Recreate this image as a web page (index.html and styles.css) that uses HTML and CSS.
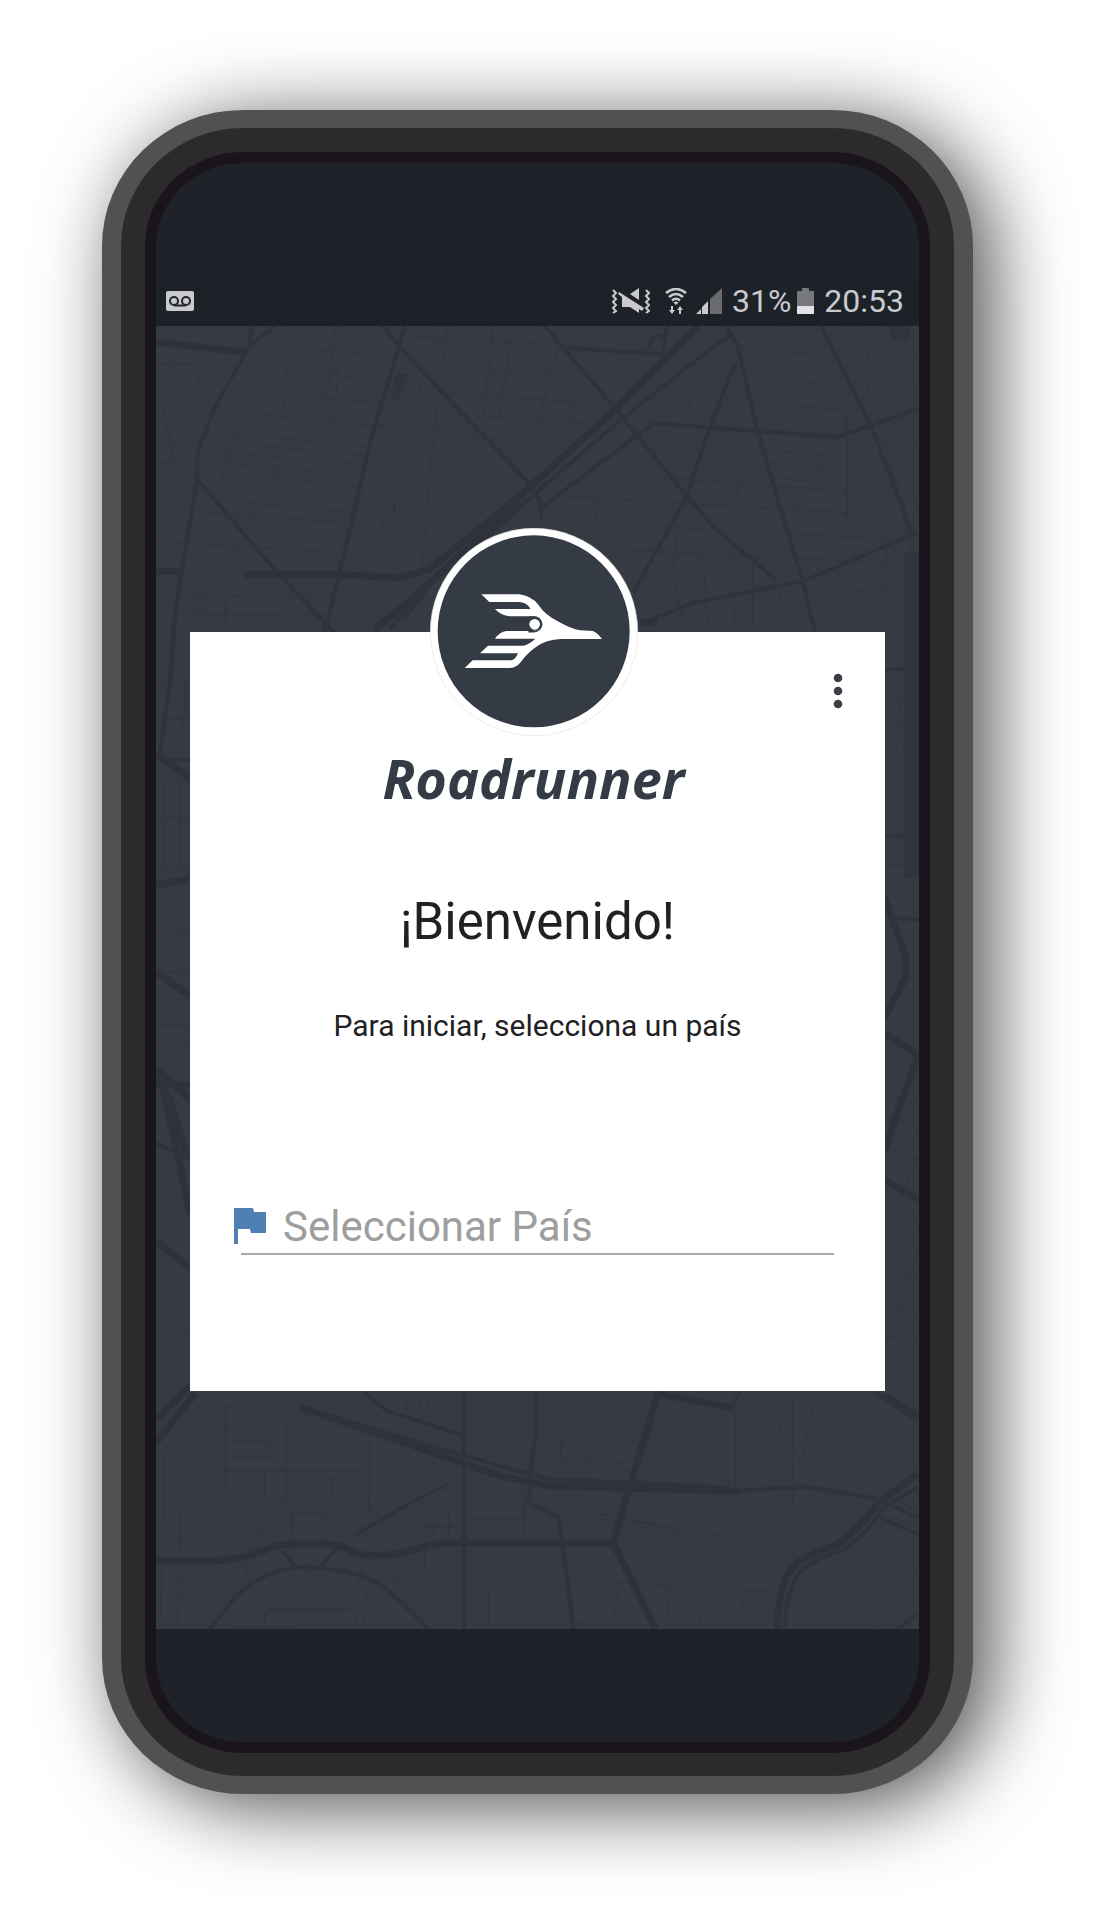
FILE: index.html
```
<!DOCTYPE html>
<html lang="es">
<head>
<meta charset="utf-8">
<meta name="viewport" content="width=device-width, initial-scale=1">
<title>Roadrunner</title>
<link rel="stylesheet" href="styles.css">
</head>
<body>
<main class="phone">
  <div class="bezel">
    <div class="screen">
      <div class="app">
        <svg class="map" viewBox="0 0 762 1353" preserveAspectRatio="xMidYMid slice" aria-hidden="true">
          <!-- north -->
          <g transform="translate(-6 44) scale(.4975 .3333)">
            <g class="street">
              <path d="M10 135H95L100 200L40 235L10 220M50 135L45 180M240 105L275 155L265 300M275 88L480 108M270 155L470 182M270 230L520 255M130 265L320 305L540 328L760 378M375 0L350 300M380 0L372 320M600 0L575 270L560 500L545 760M580 0L540 220M600 152L865 158M595 225L890 250M675 290L900 315M690 0L670 290M725 60L700 300M820 80L755 440M850 250V315M520 50L800 75"/>
              <path d="M160 340L440 385M155 370L440 410M150 400L430 435M145 430L420 470M140 460L420 500M130 540L410 580M110 580L400 610M190 290L150 430L140 560M250 440V520M210 570L170 725M10 355L90 375M10 430H60M20 230L50 430M10 665L380 700M10 825L330 832M60 885L360 890M90 830V930M105 830V930M150 832V930M230 790L260 820"/>
              <path d="M890 460L1480 525M830 530L1400 580M1010 400H1090M900 540L890 640M1130 480L1120 560M1180 490V550M1050 625L1500 660M930 690L1480 730M950 760H980M1210 175L1355 195M1210 248L1390 272L1400 310L1300 570M1230 390L1360 410M1240 430L1350 455M1245 475L1325 485M1230 320L1100 470M1180 85L1320 105L1265 0M1320 105L1400 300L1400 600M970 290L1090 205L1165 235M1080 240L1090 310"/>
              <path d="M1060 625L1050 740L1070 930M1110 700L1120 930M1170 700L1175 930M1210 720V930M1260 800L1280 930M1340 790L1400 820L1500 800M1380 930L1450 830M1480 665L1475 930M1450 90L1490 140L1540 100M1490 140L1540 220M1400 0L1440 200L1500 500L1530 700M1420 0L1470 250L1540 560M1505 280L1540 380"/>
              <path d="M0 -95L60 -130L110 -60L140 -100M130 -130L200 -70M600 -125V0M420 -100L520 -110M420 -60L560 -50M700 -130L760 0M800 -130L1100 -95M820 -60L1080 -30M1250 -130L1350 0M1380 -130V0"/>
            </g>
            <g class="road">
              <path d="M210 -130L200 80L130 265L95 400V480L250 750L370 940M200 80L260 10L375 -120L460 10L500 80L600 240L760 490L785 550V600M530 -130L510 30L440 380L400 640L350 940"/>
              <path d="M95 480L65 740L45 940M700 -130L790 15L935 270L1075 525L1130 620L1255 780M1160 -60V30L1180 80L1220 340L1270 590L1310 780L1335 940M1175 130L1120 340L1075 540L970 820M830 85L1030 105L1040 0M980 345L1010 312L1380 353L1540 270M980 345L790 560M1000 905L1090 850L1310 785L1540 640M1310 -130L1350 30L1450 330L1530 640M1000 90Q1010 30 1030 60"/>
            </g>
            <path class="avenue" d="M10 68L195 100M10 755H65M190 765H380L500 775L560 750L750 520L935 270L1100 20M450 930L510 860L740 550M985 910L1020 905"/>
            <path class="road" d="M510 900L560 800L760 540L930 320L1090 130L1170 40M480 930L540 820L740 570"/>
            <path class="lake" d="M495 160L520 165L500 240L483 240ZM485 540L495 560L490 580ZM460 605L475 620L470 628ZM1480 20H1525V62L1490 60ZM1515 700H1544V960H1515Z"/>
          </g>
          <!-- east -->
          <g transform="translate(644 344) scale(.3333 .51)">
            <path class="lake" d="M309 0H354V507H309Z"/>
            <path class="street" d="M250 150L310 158M250 200L310 205M250 265L310 272M250 330L310 335M250 390L310 375M250 480H310M300 150L285 270M250 680L290 700M250 935L354 945M250 970L354 1000M250 1035L354 1060M354 1050L280 1160M250 1160L354 1185M354 1230L250 1430M250 1270L354 1285M250 1345L354 1360M270 1405L354 1415"/>
            <path class="road" d="M250 98H310M250 423H310M270 583L354 588"/>
            <path class="avenue" d="M250 545L315 660V700L250 780M250 810L350 852L250 1040M250 1098L354 1135M250 1520L354 1560"/>
          </g>
          <!-- west -->
          <g transform="translate(-6 344) scale(.3333 .51)">
            <path class="street" d="M18 125H120M18 195H120M110 120L90 270M18 315H120M18 387H120M18 490H120M90 315L85 690M18 615H120M18 690H120M18 745H120M18 793H120M18 828H120M18 1390L120 1400M18 1435L120 1470M40 320V490"/>
            <path class="road" d="M75 0L60 120L30 265M30 275H120M18 1025L120 1055"/>
            <path class="avenue" d="M18 265L120 310M18 520L120 508M18 690L120 737M18 900L60 940L110 1050M40 920L90 1070L120 1165M18 910L120 912M18 880L120 940M18 1217L120 1270M20 1568L120 1500"/>
          </g>
          <!-- south -->
          <g transform="translate(-6 1104) scale(.4975 .3333)">
            <g class="street">
              <path d="M90 80L150 75V270M150 75H250L320 105M165 90H240V230M165 130H235M165 180H235M165 230H240M90 135H160M275 110V390M275 140H330V210M350 190H430M440 180V400M55 740L60 400Q80 300 145 272H420L435 310L440 370L490 480V620M150 272V320L180 400L250 490M230 272V340M350 290L430 320M365 290V350M180 400L220 360L275 345"/>
              <path d="M200 520Q210 400 285 398H350Q440 410 455 520M215 470L240 430H285M285 398V490M345 398V490M55 470L150 490M55 600H110L170 660M55 650Q130 660 150 700M150 500L155 610M190 520L200 620L240 690M240 685H400L380 692H260ZM400 685L430 560M320 560V740M230 690V740M415 690V740M160 740H300M450 560L435 640L430 740M490 600L620 740M555 480L550 560M540 360L555 400L550 580M540 385H630M545 440H630M570 410V470M600 390V470M630 415H750L755 360M650 130H675V40M515 40V90M540 40V90M560 40V90M600 270L610 300L410 460"/>
              <path d="M770 175L830 190L890 180L875 240M770 237L965 248M770 265L960 268M890 160L985 185M825 180V240M750 300V470M770 345L900 415L1000 430L1230 550M900 400L1200 480M880 40L950 110L1040 170L1170 330L1280 520M1040 200L1120 300M1175 85V320M1290 40V380M1335 40L1310 240M1280 40L1260 180L1310 240L1390 265L1435 80M1330 75L1420 120M1390 265L1540 390M1430 190L1460 215L1500 130M1200 350L1300 385L1350 380L1500 690M1340 390L1285 530M840 600L980 608L1250 632M940 610L930 740M1045 620L1035 740M1115 625L1100 740M1195 625L1185 740M1285 650L1460 740M1300 570L1510 700M1380 710V740M1410 510L1490 410M1460 530L1540 570M1490 410L1540 440M680 620V740M850 725L910 735M20 740L30 220L60 140"/>
            </g>
            <g class="road">
              <path d="M430 35L475 90L630 165M630 35V745M775 35V160L765 260L760 365L820 410L835 560L850 745M1165 85L1185 35M300 80L700 255L800 295L1110 315L1180 330M1180 330L1320 318L1460 355L1540 410M1455 35L1540 120M120 745L170 650Q230 560 320 558Q430 570 480 630L560 745M265 510L290 555M375 500L345 555M410 465L530 360L600 310M1465 410L1540 460M1500 745L1540 700"/>
            </g>
            <path class="avenue" d="M10 540H130C230 530 230 490 290 490H350C400 490 400 525 450 525C520 525 540 487 600 487H930L1015 745M1020 35L1000 140L960 330L930 487M1020 40L1170 82M300 80L500 180L700 285L800 315L1180 332M10 190L90 40M1540 280L1460 370Q1420 450 1380 490Q1340 510 1300 545Q1260 590 1260 745"/>
            <path class="road" d="M1540 320L1470 385Q1440 460 1395 505Q1340 530 1310 565Q1275 620 1275 745"/>
          </g>
        </svg>

        <header class="status">
          <svg width="28" height="20" viewBox="0 0 28 20" role="img" aria-label="Buzón de voz">
            <rect width="28" height="20" rx="2" fill="currentColor"/>
            <g fill="none" stroke="#24262d" stroke-width="2"><circle cx="8" cy="10" r="4"/><circle cx="20" cy="10" r="4"/><path d="M8 14.500H20"/></g>
          </svg>
          <div class="status-right">
            <svg class="vibrate" width="38" height="26" viewBox="0 0 38 26" role="img" aria-label="Sonido desactivado">
              <path d="M1 2L4 5L1 8L4 11L1 14L4 17L1 20L4 23L1 25M34 2L37 5L34 8L37 11L34 14L37 17L34 20L37 23L34 25" fill="none" stroke="currentColor" stroke-width="2"/>
              <path d="M18 6L27 0V12ZM7 4L32 20L30 23L27 21V25L18 19H10V9L6 6Z" fill="currentColor"/>
            </svg>
            <svg class="wifi" width="22" height="26" viewBox="0 0 22 26" role="img" aria-label="Wi-Fi">
              <path d="M1 5Q11 -3 21 5M4 9Q11 3 18 9M7 12.500Q11 9 15 12.500" fill="none" stroke="currentColor" stroke-width="2.600"/>
              <path d="M8.500 14.500Q11 12.500 13.500 14.500L11 17ZM6 18H8V22H10L7 26L4 22H6ZM14 26H16V22H18L15 18L12 22H14Z" fill="currentColor"/>
            </svg>
            <svg width="26" height="26" viewBox="0 0 26 26" role="img" aria-label="Señal">
              <path d="M14 11L26 0V26H14Z" fill="#696b71"/><path d="M0 26L5 21V26ZM6 19L12 13V26H6Z" fill="currentColor"/>
            </svg>
            <span class="charge">31%</span>
            <svg width="17" height="26" viewBox="0 0 17 26" role="img" aria-label="Batería">
              <path d="M5 0H12V3H17V19H0V3H5Z" fill="#77797f"/><path d="M0 18H17V26H0Z" fill="#e2e2e7"/>
            </svg>
            <time class="clock">20:53</time>
          </div>
        </header>

        <section class="card">
          <button class="more" type="button" aria-label="Más opciones">
            <svg width="10" height="36" viewBox="0 0 10 36" fill="currentColor"><circle cx="5" cy="5" r="4.300"/><circle cx="5" cy="18" r="4.300"/><circle cx="5" cy="31" r="4.300"/></svg>
          </button>
          <div class="brand">
            <svg class="logo" viewBox="27 23 624 624" aria-hidden="true">
              <circle cx="339" cy="335" r="311" fill="#fff" stroke="#e4e4e7" stroke-width="2"/>
              <circle cx="338" cy="333" r="288" fill="#343b44"/>
              <path fill="#fff" d="M181 222H295Q330 226 352 253Q372 283 408 301Q450 326 478 330L516 332Q530 338 543 356H420Q375 358 345 380Q320 397 302 422Q287 443 267 443H131L155 420H272Q283 418 291 399H177L201 376H308Q325 372 343 355H222Q236 334 257 332H325Q340 334 352 327Q364 318 361 304Q355 288 336 288H266Q240 286 222 266H329Q318 247 296 245H205Z"/>
              <path fill="none" stroke="#343b44" stroke-width="5" d="M325 290H340Q360 292 362 312Q359 332 338 334H322"/>
              <circle cx="341" cy="312" r="16" fill="#fff"/>
            </svg>
            <p class="wordmark">Roadrunner</p>
          </div>
          <h1 class="title">¡Bienvenido!</h1>
          <label class="hint" for="country">Para iniciar, selecciona un país</label>
          <div class="field">
            <svg class="flag" width="32" height="36" viewBox="0 0 32 36" aria-hidden="true"><path fill="#4e80b4" d="M0 0H19L20 4H32V25H17L16 21H4V36H0Z"/></svg>
            <select class="country" id="country">
              <option>Seleccionar País</option>
            </select>
          </div>
        </section>
      </div>
    </div>
  </div>
</main>
</body>
</html>
```
FILE: styles.css
```
* {
  box-sizing: border-box;
}

body {
  margin: 0;
  padding: 110px 140px 131px 102px;
  background: #fff;
  font-family: Roboto, "Liberation Sans", sans-serif;
}

.phone {
  border: solid #515151;
  border-width: 18px 19px;
  border-radius: 141px / 136px;
  background: #2d2a2b;
  box-shadow: 18px 12px 80px rgba(0, 0, 0, 0.7);
}

.bezel {
  padding: 24px 24px 23px;
}

.screen {
  overflow: hidden;
  padding: 113px 0;
  border: 11px solid #1a141c;
  border-radius: 98px / 94px;
  background: #1f2329;
}

.app {
  position: relative;
  overflow: hidden;
  padding-bottom: 238px;
  background: #363a43;
}

.map {
  position: absolute;
  inset: 0;
  width: 100%;
  height: 100%;
}

.map path {
  fill: none;
  stroke-linejoin: round;
  vector-effect: non-scaling-stroke;
}

.street {
  stroke: #31353e;
  stroke-width: 1px;
}

.road {
  stroke: #2f333c;
  stroke-width: 4px;
}

.avenue {
  stroke: #2e323b;
  stroke-width: 7px;
}

.map .lake {
  fill: #30343e;
}

.status {
  position: relative;
  display: flex;
  align-items: center;
  justify-content: space-between;
  height: 50px;
  padding: 0 15px 0 10px;
  background: rgba(24, 28, 34, 0.8);
  color: #c9c9cf;
}

.status-right {
  display: flex;
  align-items: center;
  font-size: 32px;
  line-height: 38px;
}

.vibrate {
  margin-right: 15px;
}

.wifi {
  margin-right: 9px;
}

.charge {
  margin: 0 6px 0 10px;
}

.clock {
  margin-left: 10px;
}

.card {
  position: relative;
  display: flex;
  flex-direction: column;
  margin: 306px 34px 0;
  padding: 0 51px 136px;
  background: #fff;
  color: #212121;
  text-align: center;
}

.more {
  position: absolute;
  top: 35px;
  right: 23px;
  display: grid;
  place-items: center;
  width: 48px;
  height: 48px;
  padding: 0;
  border: 0;
  background: none;
  color: #3a3f47;
}

.brand {
  display: flex;
  flex-direction: column;
  align-items: center;
  margin-top: -104px;
  padding-right: 8px;
}

.logo {
  width: 208px;
  height: 208px;
}

.wordmark {
  margin: 10px 0 0;
  color: #343b44;
  font: italic 700 54px/64px "Open Sans", "Noto Sans", sans-serif;
}

.title {
  margin: 82px 0 0;
  font-size: 51px;
  font-weight: 400;
  line-height: 60px;
}

.hint {
  margin-top: 56px;
  font-size: 30px;
  line-height: 36px;
}

.field {
  position: relative;
  margin-top: 156px;
}

.flag {
  position: absolute;
  top: 8px;
  left: -7px;
}

.country {
  display: block;
  width: 100%;
  height: 55px;
  padding: 0 0 0 42px;
  border: 0;
  border-bottom: 2px solid #aaa;
  border-radius: 0;
  background: none;
  color: #9e9e9e;
  appearance: none;
  font: 42px/52px Roboto, "Liberation Sans", sans-serif;
}
```
